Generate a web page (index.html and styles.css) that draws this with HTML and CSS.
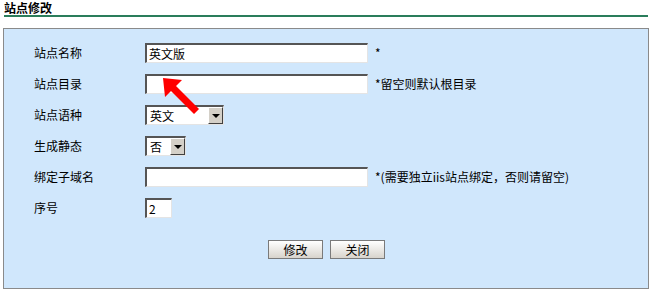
FILE: index.html
```html
<!DOCTYPE html>
<html lang="zh-CN">
<head>
    <meta charset="UTF-8">
    <title>站点修改</title>
    <link rel="stylesheet" href="styles.css">
</head>
<body>
    <div class="title-bar">
        <h1>站点修改</h1>
    </div>

    <div class="panel">
        <form class="site-form">
            <div class="row">
                <label>站点名称</label>
                <div class="field">
                    <input type="text" class="text wide" value="英文版">
                    <span class="hint">*</span>
                </div>
            </div>
            <div class="row">
                <label>站点目录</label>
                <div class="field">
                    <input type="text" class="text wide" value="">
                    <span class="hint">*留空则默认根目录</span>
                </div>
            </div>
            <div class="row">
                <label>站点语种</label>
                <div class="field">
                    <div class="select lang"><span class="value">英文</span><span class="drop"></span></div>
                </div>
            </div>
            <div class="row">
                <label>生成静态</label>
                <div class="field">
                    <div class="select short"><span class="value">否</span><span class="drop"></span></div>
                </div>
            </div>
            <div class="row">
                <label>绑定子域名</label>
                <div class="field">
                    <input type="text" class="text wide" value="">
                    <span class="hint">*(需要独立iis站点绑定，否则请留空)</span>
                </div>
            </div>
            <div class="row">
                <label>序号</label>
                <div class="field">
                    <input type="text" class="text num" value="2">
                </div>
            </div>
            <div class="actions">
                <button type="button">修改</button>
                <button type="button">关闭</button>
            </div>
        </form>

        <svg class="arrow" width="40" height="40" viewBox="0 0 40 40">
            <polygon points="1,1 20,3 14,9 37,32 32,37 9,14 3,20" fill="#f00"/>
        </svg>
    </div>
</body>
</html>
```

FILE: styles.css
```css
body {
    margin: 0;
    padding: 0;
    background: #ffffff;
    font-family: "Noto Sans CJK SC", "DejaVu Sans", sans-serif;
    font-size: 12px;
    color: #000;
}

.title-bar {
    margin: 0 4px 0 4px;
    height: 15px;
    border-bottom: 2px solid #2a7d5b;
}

.title-bar h1 {
    margin: 0;
    padding: 1px 0 0 0;
    font-size: 12px;
    line-height: 14px;
    font-weight: bold;
}

.panel {
    position: relative;
    margin: 11px 3px 0 3px;
    height: 261px;
    border: 1px solid #8a8a8a;
    background: #d0e7fc;
    box-sizing: border-box;
}

.site-form {
    padding-top: 8px;
}

.row {
    display: flex;
    align-items: center;
    height: 31px;
}

.row label {
    width: 111px;
    padding-left: 30px;
    line-height: 14px;
}

.field {
    display: flex;
    align-items: center;
}

.text {
    height: 20px;
    box-sizing: border-box;
    padding: 0 2px;
    border-style: solid;
    border-width: 2px 1px 1px 2px;
    border-color: #555 #e4e4e4 #e4e4e4 #555;
    background: #fff;
    font-family: "Noto Sans CJK SC", "DejaVu Sans", sans-serif;
    font-size: 12px;
    outline: none;
}

.wide {
    width: 223px;
}

.num {
    width: 27px;
}

.hint {
    margin-left: 7px;
}

.select {
    display: flex;
    height: 20px;
    box-sizing: border-box;
    border-style: solid;
    border-width: 2px 1px 1px 2px;
    border-color: #555 #e4e4e4 #e4e4e4 #555;
    background: #fff;
}

.select .value {
    flex: 1;
    padding-left: 3px;
    line-height: 17px;
}

.select .drop {
    position: relative;
    width: 15px;
    background: #d4d0c8;
    border-style: solid;
    border-width: 1px;
    border-color: #fff #404040 #404040 #fff;
    box-sizing: border-box;
}

.select .drop::after {
    content: "";
    position: absolute;
    left: 3px;
    top: 6px;
    border-style: solid;
    border-width: 4px 4px 0 4px;
    border-color: #000 transparent transparent transparent;
}

.lang {
    width: 79px;
}

.short {
    width: 41px;
}

.actions {
    display: flex;
    justify-content: center;
    gap: 7px;
    margin-top: 17px;
    padding-left: 1px;
}

.actions button {
    width: 55px;
    height: 19px;
    padding: 0;
    border: 1px solid #7a7a7a;
    background: linear-gradient(#ffffff, #d8d4cc);
    font-family: "Noto Sans CJK SC", "DejaVu Sans", sans-serif;
    font-size: 12px;
    line-height: 16px;
    color: #000;
}

.arrow {
    position: absolute;
    left: 158px;
    top: 48px;
}
```
